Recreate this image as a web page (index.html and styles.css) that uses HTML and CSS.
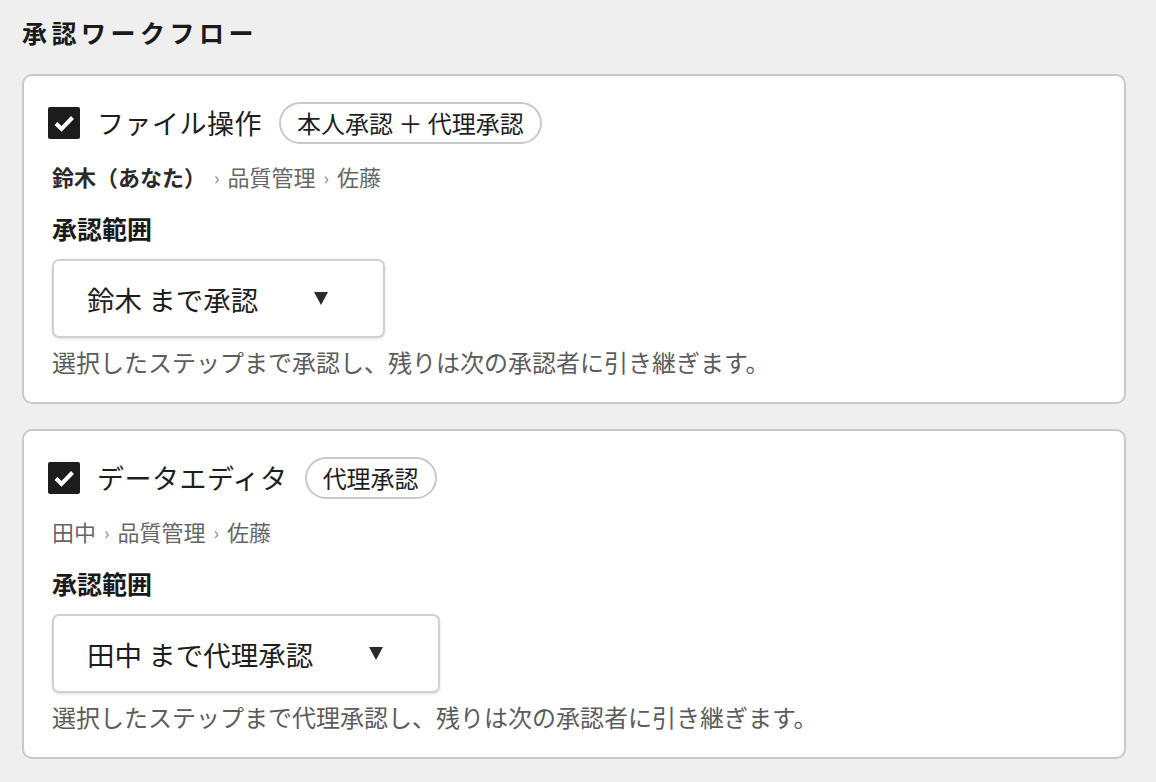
FILE: index.html
```html
<!DOCTYPE html>
<html lang="ja">

<head>
    <meta charset="UTF-8">
    <meta name="viewport" content="width=device-width, initial-scale=1.0">
    <title>承認ワークフロー</title>
    <link rel="stylesheet" href="styles.css">
</head>

<body>

    <h1>承認ワークフロー</h1>

    <div class="card">
        <div class="card-head">
            <span class="check">
                <svg width="32" height="32" viewBox="0 0 32 32">
                    <path d="M8 16.5 L13.5 22 L24.5 10.5" fill="none" stroke="#fff" stroke-width="4" />
                </svg>
            </span>
            <span class="name">ファイル操作</span>
            <span class="badge">本人承認 ＋ 代理承認</span>
        </div>
        <div class="route">
            <strong>鈴木（あなた）</strong><span class="sep">›</span>品質管理<span class="sep">›</span>佐藤
        </div>
        <h2>承認範囲</h2>
        <div class="select">
            <span>鈴木 まで承認</span>
            <svg class="arrow" width="14" height="13" viewBox="0 0 14 13">
                <path d="M0 0 H14 L7 13 Z" fill="#2b2b2b" />
            </svg>
        </div>
        <p class="help">選択したステップまで承認し、残りは次の承認者に引き継ぎます。</p>
    </div>

    <div class="card">
        <div class="card-head">
            <span class="check">
                <svg width="32" height="32" viewBox="0 0 32 32">
                    <path d="M8 16.5 L13.5 22 L24.5 10.5" fill="none" stroke="#fff" stroke-width="4" />
                </svg>
            </span>
            <span class="name">データエディタ</span>
            <span class="badge">代理承認</span>
        </div>
        <div class="route">
            田中<span class="sep">›</span>品質管理<span class="sep">›</span>佐藤
        </div>
        <h2>承認範囲</h2>
        <div class="select">
            <span>田中 まで代理承認</span>
            <svg class="arrow" width="14" height="13" viewBox="0 0 14 13">
                <path d="M0 0 H14 L7 13 Z" fill="#2b2b2b" />
            </svg>
        </div>
        <p class="help">選択したステップまで代理承認し、残りは次の承認者に引き継ぎます。</p>
    </div>

</body>

</html>
```

FILE: styles.css
```css
/* Basic Reset */
* {
    margin: 0;
    padding: 0;
    box-sizing: border-box;
}

body {
    background-color: #efefef;
    font-family: "Noto Sans CJK JP", "Noto Sans", sans-serif;
    color: #1e1e1e;
    padding: 14px 30px 0 22px;
}

h1 {
    font-size: 25px;
    font-weight: 700;
    line-height: 36px;
    letter-spacing: 4.5px;
    color: #1a1a1a;
    margin-bottom: 24px;
}

/* Workflow card */
.card {
    background-color: #fff;
    border: 2px solid #c9c9c9;
    border-radius: 10px;
    padding: 26px 28px 24px 28px;
    margin-bottom: 25px;
}

.card-head {
    display: flex;
    align-items: center;
    gap: 17px;
    height: 42px;
}

.check {
    width: 32px;
    height: 32px;
    margin-left: -4px;
    background-color: #1c1c1c;
    border-radius: 2px;
    display: block;
}

.check svg {
    display: block;
}

.name {
    font-size: 27px;
    line-height: 42px;
    letter-spacing: 0.5px;
}

.badge {
    border: 2px solid #c9c9c9;
    border-radius: 21px;
    height: 42px;
    padding: 0 16px;
    font-size: 24px;
    line-height: 38px;
}

.route {
    margin-top: 16px;
    font-size: 22px;
    line-height: 32px;
    color: #666;
}

.route strong {
    color: #2a2a2a;
    font-weight: 700;
}

.sep {
    font-size: 18px;
    color: #8a8a8a;
    margin: 0 8px;
    vertical-align: 1px;
}

h2 {
    margin-top: 17px;
    font-size: 25px;
    font-weight: 700;
    line-height: 36px;
    color: #1a1a1a;
}

/* Dropdown */
.select {
    display: inline-flex;
    align-items: center;
    gap: 56px;
    height: 79px;
    margin-top: 13px;
    padding: 0 55px 0 33px;
    border: 2px solid #cdd1d6;
    border-radius: 7px;
    box-shadow: 0 1px 3px rgba(0, 0, 0, 0.12);
    font-size: 27.5px;
    color: #1e1e1e;
}

.arrow {
    display: block;
}

.help {
    margin-top: 8px;
    font-size: 24px;
    line-height: 32px;
    color: #5c5c5c;
}
```
